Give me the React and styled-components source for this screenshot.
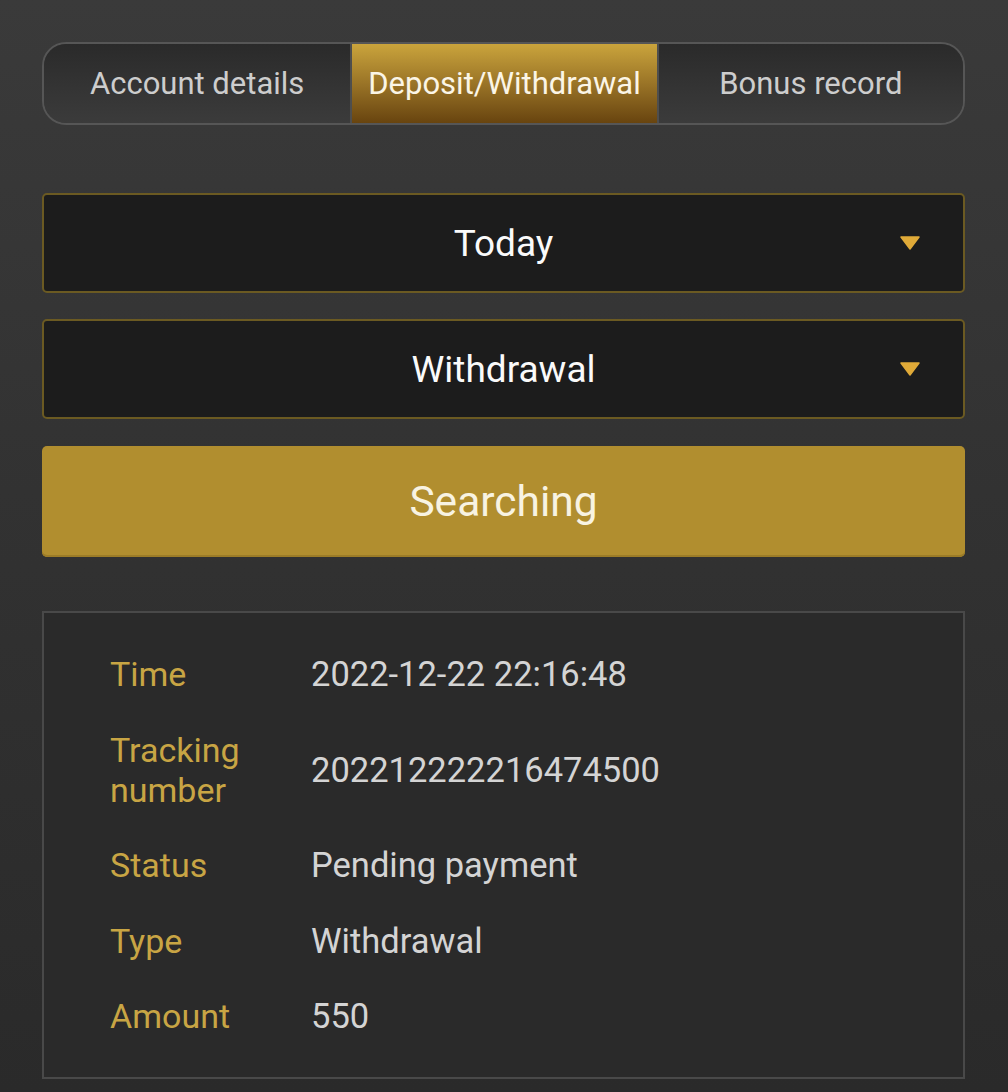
import React from 'react';
import styled, { createGlobalStyle } from 'styled-components';

const COLORS = {
  gold: '#c8a544',
  goldDark: '#6b5a22',
  button: '#b18e2f',
  arrow: '#e0aa38',
  value: '#d4d4d4',
};

const GlobalStyle = createGlobalStyle`
  html, body {
    margin: 0;
    padding: 0;
  }
  body {
    font-family: Roboto, "Liberation Sans", sans-serif;
    background: #2b2b2b;
  }
`;

const TABS = ['Account details', 'Deposit/Withdrawal', 'Bonus record'];

const ROWS = [
  { label: 'Time', value: '2022-12-22 22:16:48' },
  { label: 'Tracking number', value: '202212222216474500' },
  { label: 'Status', value: 'Pending payment' },
  { label: 'Type', value: 'Withdrawal' },
  { label: 'Amount', value: '550' },
];

const Caret = () => (
  <svg width="20" height="14" viewBox="0 0 20 14">
    <path d="M1 1 H19 L10 13 Z" fill={COLORS.arrow} stroke={COLORS.arrow} strokeLinejoin="round" strokeWidth="1.5" />
  </svg>
);

const App = () => {
  const active = 1;
  return (
    <Page>
      <GlobalStyle />
      <Tabs>
        {TABS.map((t, i) => (
          <Tab key={t} $active={i === active}>{t}</Tab>
        ))}
      </Tabs>

      <Selects>
        <Select>
          Today
          <CaretSlot><Caret /></CaretSlot>
        </Select>
        <Select>
          Withdrawal
          <CaretSlot><Caret /></CaretSlot>
        </Select>
        <SearchButton>Searching</SearchButton>
      </Selects>

      <Record>
        {ROWS.map(r => (
          <Row key={r.label}>
            <Label>{r.label}</Label>
            <Value>{r.value}</Value>
          </Row>
        ))}
      </Record>
    </Page>
  );
};

const Page = styled.div`
  min-height: 1092px;
  box-sizing: border-box;
  padding: 42px 43px 12px 42px;
  background: linear-gradient(180deg, #3a3a3a 0%, #323232 45%, #2a2a2a 100%);
`;

const Tabs = styled.div`
  display: grid;
  grid-template-columns: 1fr 1fr 1fr;
  height: 83px;
  box-sizing: border-box;
  border: 2px solid #565656;
  border-radius: 24px;
  overflow: hidden;
`;

const Tab = styled.div`
  display: flex;
  align-items: center;
  justify-content: center;
  font-size: 31px;
  color: ${p => (p.$active ? '#fbf5e6' : '#cdcdcd')};
  background: ${p =>
    p.$active
      ? 'linear-gradient(180deg, #caa43c 0%, #9a7427 50%, #68440f 100%)'
      : 'linear-gradient(180deg, #2a2a2a 0%, #333333 50%, #3b3b3b 100%)'};
  & + & {
    border-left: 2px solid #4e4e4e;
  }
`;

const Selects = styled.div`
  display: flex;
  flex-direction: column;
  gap: 26px;
  margin-top: 68px;
`;

const Select = styled.div`
  position: relative;
  height: 100px;
  box-sizing: border-box;
  display: flex;
  align-items: center;
  justify-content: center;
  background: #1c1c1c;
  border: 2px solid ${COLORS.goldDark};
  border-radius: 5px;
  color: #fafafa;
  font-size: 37px;
`;

const CaretSlot = styled.span`
  position: absolute;
  right: 43px;
  top: 50%;
  margin-top: -7px;
  display: flex;
`;

const SearchButton = styled.div`
  height: 111px;
  margin-top: 1px;
  display: flex;
  align-items: center;
  justify-content: center;
  background: ${COLORS.button};
  border-radius: 5px;
  box-shadow: inset 0 -2px 0 #9c7c27;
  color: #f8f3e2;
  font-size: 42.5px;
`;

const Record = styled.div`
  margin-top: 54px;
  box-sizing: border-box;
  border: 2px solid #494949;
  background: #2a2a2a;
  padding: 41px 66px 41px 66px;
  display: flex;
  flex-direction: column;
  gap: 35.5px;
`;

const Row = styled.div`
  display: grid;
  grid-template-columns: 201px 1fr;
  align-items: center;
  font-size: 34px;
  line-height: 40px;
`;

const Label = styled.div`
  color: ${COLORS.gold};
  padding-right: 40px;
`;

const Value = styled.div`
  color: ${COLORS.value};
  font-size: 34.5px;
`;

export default App;
